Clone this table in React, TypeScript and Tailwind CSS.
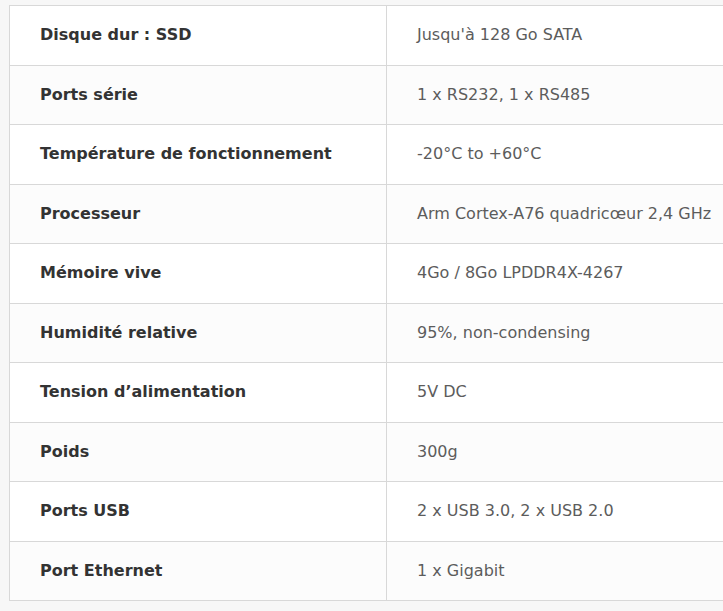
const specs: [string, string][] = [
  ["Disque dur : SSD", "Jusqu'à 128 Go SATA"],
  ["Ports série", "1 x RS232, 1 x RS485"],
  ["Température de fonctionnement", "-20°C to +60°C"],
  ["Processeur", "Arm Cortex-A76 quadricœur 2,4 GHz"],
  ["Mémoire vive", "4Go / 8Go LPDDR4X-4267"],
  ["Humidité relative", "95%, non-condensing"],
  ["Tension d’alimentation", "5V DC"],
  ["Poids", "300g"],
  ["Ports USB", "2 x USB 3.0, 2 x USB 2.0"],
  ["Port Ethernet", "1 x Gigabit"],
];

export default function App() {
  return (
    <div className="min-h-screen w-full overflow-hidden bg-[#f7f7f7] pt-[5px] pl-[9px] font-['DejaVu_Sans',sans-serif]">
      <table className="w-[760px] border-collapse">
        <tbody>
          {specs.map(([label, value], i) => (
            <tr key={label} className={i % 2 === 0 ? "h-[59.5px] bg-white" : "h-[59.5px] bg-[#fcfcfc]"}>
              <td className="w-[377px] border border-[#d8d8d8] pl-[30px] text-[16px] font-bold text-[#333333]">
                {label}
              </td>
              <td className="border border-[#d8d8d8] pl-[30px] text-[16px] text-[#5c5c5c]">
                {value}
              </td>
            </tr>
          ))}
        </tbody>
      </table>
    </div>
  );
}
